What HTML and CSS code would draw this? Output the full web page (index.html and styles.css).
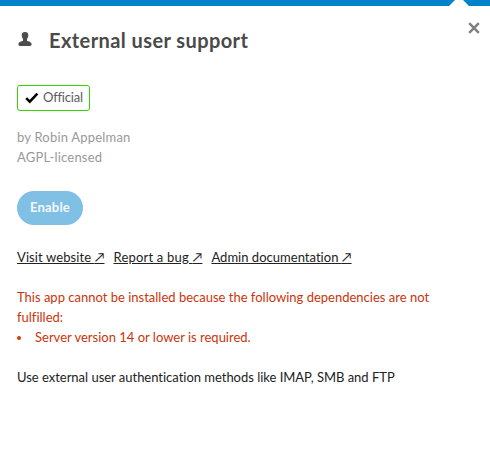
FILE: index.html
```html
<!DOCTYPE html>
<html lang="en">
<head>
    <meta charset="UTF-8">
    <meta name="viewport" content="width=device-width, initial-scale=1.0">
    <title>External user support</title>
    <link rel="stylesheet" href="styles.css">
</head>
<body>
    <header class="header">
        <svg class="caret" width="20" height="6" viewBox="0 0 20 6"><path d="M0 6 L6 0 H14 L20 6 Z" fill="#fff"/></svg>
    </header>

    <main class="app-details">
        <button class="close" aria-label="Close">
            <svg width="12" height="12" viewBox="0 0 12 12"><path d="M1.2 1.2 L10.8 10.8 M10.8 1.2 L1.2 10.8" stroke="#808080" stroke-width="2.5"/></svg>
        </button>

        <h2 class="title">
            <svg class="app-icon" width="14" height="14" viewBox="0 0 14 14"><path d="M7 0 C4.8 0 3.6 1.2 3.7 3.4 C3.8 5 4.4 6 5 7 V8.7 C3.5 9.4 .5 9.8 .4 12 C.4 13.2 .9 14 2 14 H12 C13.1 14 13.6 13.2 13.6 12 C13.5 9.8 10.5 9.4 9 8.7 V7 C9.6 6 10.2 5 10.3 3.4 C10.4 1.2 9.2 0 7 0 Z" fill="#4d4d4d"/></svg>
            <span class="title-text">External user support</span>
        </h2>

        <div class="level">
            <span class="official">
                <svg width="14" height="12" viewBox="0 0 14 12"><path d="M1.2 6.2 L4.8 9.7 L12.4 1.7" fill="none" stroke="#000" stroke-width="2.5"/></svg>
                <span class="official-text">Official</span>
            </span>
        </div>

        <div class="author">by Robin Appelman<br>AGPL-licensed</div>

        <button class="enable" disabled>Enable</button>

        <p class="links">
            <a href="#" class="website">Visit website <span class="arrow">↗</span></a>
            <a href="#" class="bug">Report a bug <span class="arrow">↗</span></a>
            <a href="#" class="docs">Admin documentation <span class="arrow">↗</span></a>
        </p>

        <div class="dependencies">
            This app cannot be installed because the following dependencies are not fulfilled:
            <ul>
                <li>Server version 14 or lower is required.</li>
            </ul>
        </div>

        <p class="description">Use external user authentication methods like IMAP, SMB and FTP</p>
    </main>
</body>
</html>
```
FILE: styles.css
```css
body {
    margin: 0;
    background: #fff;
    color: #222;
    font-family: Lato, sans-serif;
    font-size: 13px;
    font-variant-ligatures: none;
    line-height: 20px;
}
.header {
    display: flex;
    justify-content: flex-end;
    height: 6px;
    padding-right: 21px;
    background: #0082c9;
}
.caret {
    display: block;
}
.app-details {
    position: relative;
    padding: 19px 17px 0;
}
.close {
    position: absolute;
    top: 16px;
    right: 10px;
    padding: 0;
    border: 0;
    background: none;
}
.close svg {
    display: block;
}
.title {
    display: flex;
    align-items: center;
    gap: 17px;
    height: 30px;
    margin: 0;
    padding-left: 1px;
    color: #4a4a4a;
    font-size: 20px;
    font-weight: bold;
    letter-spacing: .42px;
    line-height: 30px;
}
.app-icon {
    margin-top: -2px;
}
.level {
    display: flex;
    margin-top: 30px;
}
.official {
    display: flex;
    align-items: center;
    gap: 4px;
    box-sizing: border-box;
    width: 73px;
    height: 26px;
    padding-left: 7px;
    border: 1px solid #37ce02;
    border-radius: 3px;
    color: #5c5c5c;
    letter-spacing: -.2px;
}
.official-text {
    padding-bottom: 2px;
}
.author {
    margin-top: 16px;
    color: #999;
    letter-spacing: .2px;
}
.enable {
    display: block;
    width: 66px;
    height: 34px;
    margin-top: 24px;
    padding: 0 0 2px;
    border: 0;
    border-radius: 17px;
    background: #80c0e4;
    color: #f3f9fc;
    font-family: inherit;
    font-size: 13px;
    font-weight: bold;
    letter-spacing: .2px;
}
.links {
    display: flex;
    gap: 9px;
    margin: 22px 0 0;
    letter-spacing: .1px;
}
.links a {
    color: #222;
    white-space: nowrap;
}
.links .bug {
    letter-spacing: .2px;
}
.links .docs {
    letter-spacing: .02px;
}
.dependencies {
    width: 440px;
    margin-top: 20px;
    color: #c9350c;
}
.dependencies ul {
    margin: 0;
    padding: 0;
    list-style: none;
}
.dependencies li {
    display: flex;
    align-items: center;
    gap: 14px;
}
.dependencies li::before {
    content: "";
    width: 4px;
    height: 4px;
    margin-top: 2px;
    border-radius: 50%;
    background: #d33a08;
}
.description {
    margin: 20px 0 0;
    letter-spacing: -.02px;
}
```
